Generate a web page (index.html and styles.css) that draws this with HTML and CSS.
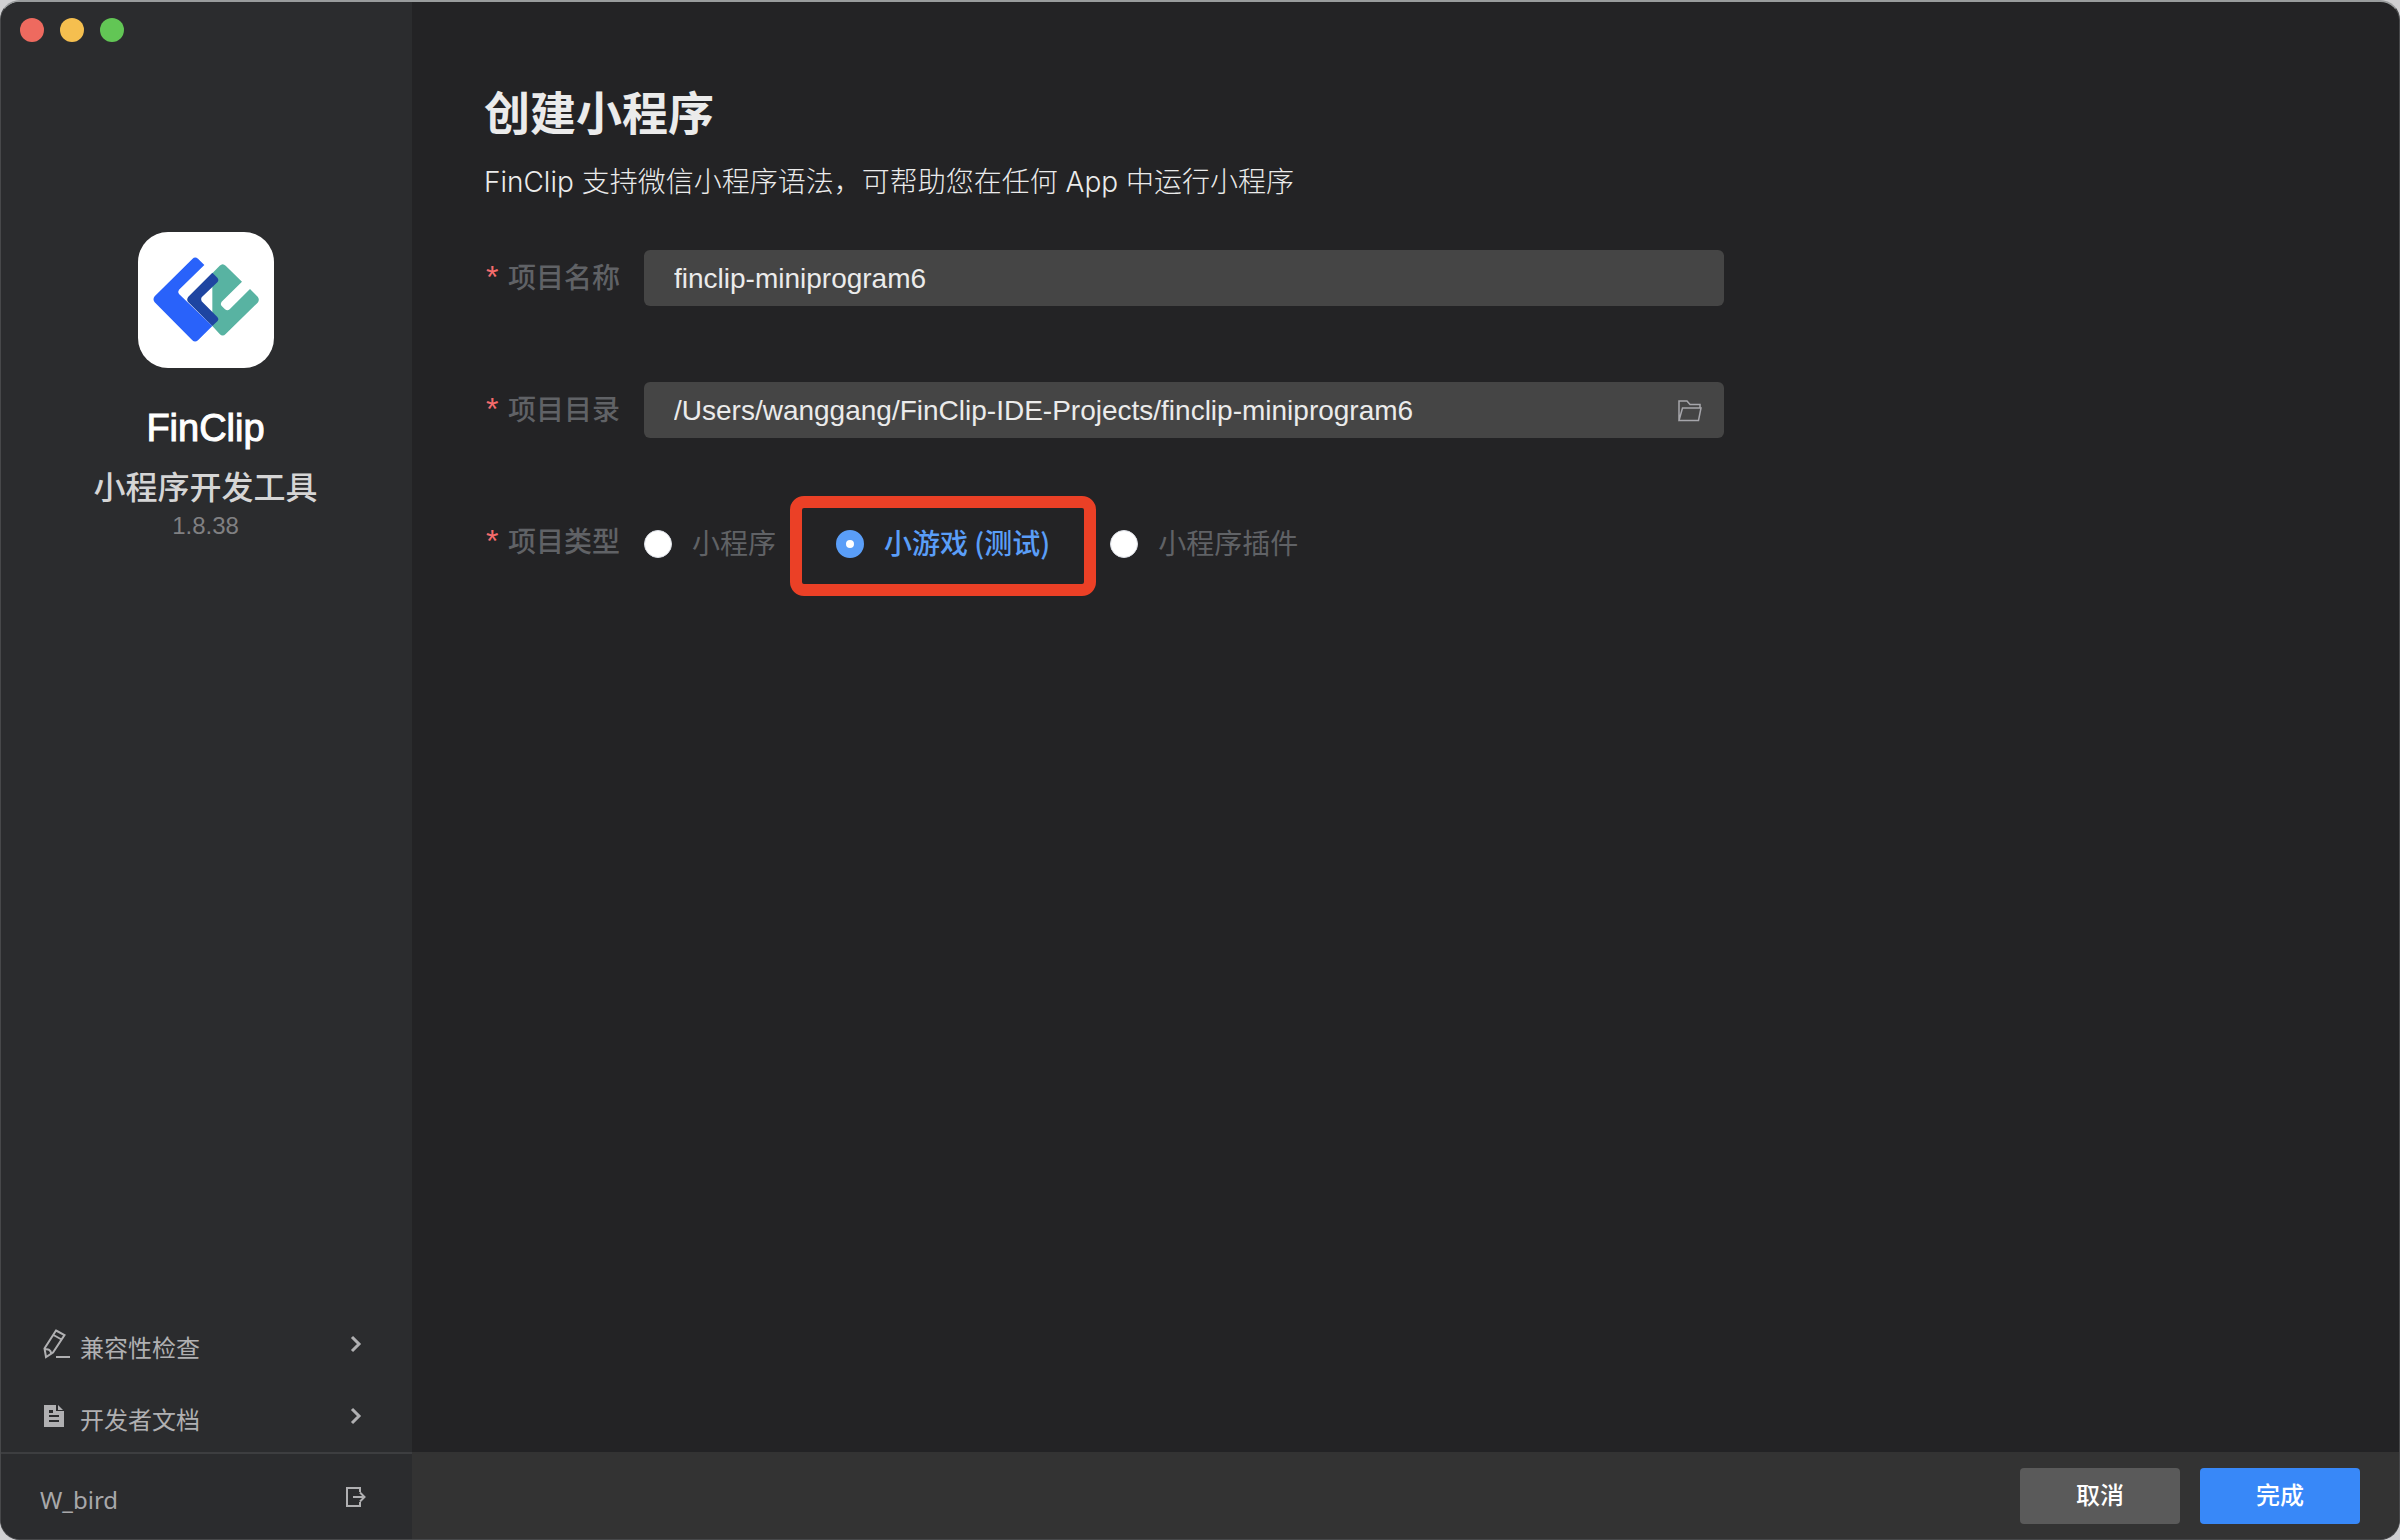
FILE: index.html
```
<!DOCTYPE html>
<html lang="zh-CN">
<head>
<meta charset="utf-8">
<title>FinClip 小程序开发工具</title>
<link rel="stylesheet" href="styles.css">
</head>
<body>
<div class="window">
    <aside class="sidebar">
        <div class="lights">
            <button class="light light-close" aria-label="关闭"></button>
            <button class="light light-min" aria-label="最小化"></button>
            <button class="light light-max" aria-label="缩放"></button>
        </div>
        <div class="brand">
            <svg class="logo" viewBox="0 0 408 408">
                <path fill="#2962fa" d="M163 81Q171 73 180 80L199 99L123 173Q118 180 123 186L223 282L180 325Q171 332 163 325L50 211Q43 202 50 193Z"/>
                <path fill="#58b3a2" d="M223 124L245 101Q254 92 263 101L312 149L251 209Q246 216 251 222L261 232Q268 238 275 232L336 171L359 194Q366 203 359 212L263 306Q254 315 245 306L223 282Z"/>
                <path fill="#1e45a1" d="M223 122L238 137Q244 144 238 151L191 196Q187 202 191 208L238 255Q244 262 238 268L223 282L151 211Q144 203 151 194Z"/>
            </svg>
            <div class="brand-name">FinClip</div>
            <div class="brand-desc">小程序开发工具</div>
            <div class="version">1.8.38</div>
        </div>
        <nav class="menu">
            <a href="#" class="menu-item">
                <svg class="icon" viewBox="0 0 28 30" fill="none" stroke="#b0b0b2" stroke-width="2">
                    <path d="M13 1.500L21.500 6L10 23.500L3 28L1.500 19.500ZM10.500 6L18.500 10.500M2 20.500Q7 19 8.500 25M13 28H27"/>
                </svg>
                <span class="menu-text">兼容性检查</span>
                <svg class="arrow" viewBox="0 0 12 18" fill="none" stroke="#b0b0b2" stroke-width="3"><path d="M2 2L9 9L2 16"/></svg>
            </a>
            <a href="#" class="menu-item">
                <svg class="icon" viewBox="0 0 28 30">
                    <path fill="#b0b0b2" fill-rule="evenodd" d="M1 4H13V10H21V26H1ZM6 9V12H10V9ZM6 14V16H16V14ZM6 19V21H16V19Z"/>
                    <path fill="#b0b0b2" d="M15 4L20 9H15Z"/>
                </svg>
                <span class="menu-text">开发者文档</span>
                <svg class="arrow" viewBox="0 0 12 18" fill="none" stroke="#b0b0b2" stroke-width="3"><path d="M2 2L9 9L2 16"/></svg>
            </a>
        </nav>
        <div class="user">
            <span class="user-name">W_bird</span>
            <button class="icon-button" aria-label="退出">
                <svg width="20" height="20" viewBox="0 0 20 20" fill="none" stroke="#b0b0b2" stroke-width="2"><path d="M14 5V1H1V19H14V15M7 10H18M14 5.500L18.500 10L14 14.500"/></svg>
            </button>
        </div>
    </aside>
    <main class="main">
        <form class="form" id="project-form">
            <h1 class="title">创建小程序</h1>
            <p class="subtitle">FinClip 支持微信小程序语法，可帮助您在任何 App 中运行小程序</p>
            <div class="row">
                <label class="label" for="project-name"><span class="star">*</span>项目名称</label>
                <div class="field">
                    <input type="text" id="project-name" class="input" value="finclip-miniprogram6">
                </div>
            </div>
            <div class="row">
                <label class="label" for="project-path"><span class="star">*</span>项目目录</label>
                <div class="field">
                    <input type="text" id="project-path" class="input" value="/Users/wanggang/FinClip-IDE-Projects/finclip-miniprogram6">
                    <button type="button" class="icon-button" aria-label="选择目录">
                        <svg width="24" height="22" viewBox="0 0 24 22" fill="none" stroke="#a6a6ab" stroke-width="1.500"><path d="M1 20V1H9L12 4.500H22V8M1 20.500L4.500 8H23L20.500 20.500Z"/></svg>
                    </button>
                </div>
            </div>
            <div class="row" role="radiogroup" aria-labelledby="type-label">
                <span class="label" id="type-label"><span class="star">*</span>项目类型</span>
                <div class="options">
                    <label class="option"><input type="radio" name="type" class="radio"><span>小程序</span></label>
                    <label class="option option-marked"><input type="radio" name="type" class="radio" checked><span>小游戏 (测试)</span></label>
                    <label class="option"><input type="radio" name="type" class="radio"><span>小程序插件</span></label>
                </div>
            </div>
        </form>
        <footer class="footer">
            <button class="button">取消</button>
            <button class="button button-primary" form="project-form">完成</button>
        </footer>
    </main>
</div>
</body>
</html>
```
FILE: styles.css
```
* {
    box-sizing: border-box;
}

body {
    margin: 0;
    background: #d0d0d2;
    font-family: "Liberation Sans", "Noto Sans CJK SC", sans-serif;
    color: #ebebeb;
}

button {
    font-family: inherit;
    border: none;
    cursor: pointer;
}

svg {
    display: block;
}

.window {
    display: flex;
    min-height: 100vh;
    border: 1px solid #47484a;
    border-top: 2px solid #999c9d;
    border-radius: 20px;
    background: #232325;
    overflow: hidden;
}

.sidebar {
    display: flex;
    flex-direction: column;
    flex: none;
    width: 411px;
    background: #2b2c2e;
}

.lights {
    display: flex;
    gap: 16px;
    padding: 16px 19px;
}

.light {
    width: 24px;
    height: 24px;
    padding: 0;
    border-radius: 50%;
}

.light-close {
    background: #ee6a5f;
}

.light-min {
    background: #f5bf4f;
}

.light-max {
    background: #62c655;
}

.brand {
    display: flex;
    flex-direction: column;
    align-items: center;
    padding: 174px 2px 0 0;
}

.logo {
    width: 136px;
    height: 136px;
    border-radius: 30px;
    background: #fff;
}

.brand-name {
    margin-top: 36px;
    font-size: 38px;
    line-height: 48px;
    color: #fff;
    -webkit-text-stroke: 1px #fff;
}

.brand-desc {
    margin-top: 14px;
    font-size: 32px;
    font-weight: 500;
    line-height: 44px;
    color: #d5d5d5;
}

.version {
    font-size: 24px;
    line-height: 32px;
    color: #808082;
}

.menu {
    margin-top: auto;
}

.menu-item {
    display: flex;
    align-items: center;
    height: 72px;
    padding: 0 50px 0 42px;
    font-size: 24px;
    color: #b0b0b2;
    text-decoration: none;
}

.menu-text {
    padding-top: 4px;
}

.icon {
    width: 28px;
    height: 30px;
    margin-right: 9px;
}

.arrow {
    width: 12px;
    height: 18px;
    margin-left: auto;
}

.user {
    display: flex;
    align-items: center;
    justify-content: space-between;
    height: 87px;
    padding: 0 46px 0 39px;
    border-top: 2px solid #3d3e40;
    font-family: "Noto Sans", sans-serif;
    font-size: 24px;
    color: #a8a8aa;
}

.user-name {
    padding-top: 6px;
}

.icon-button {
    padding: 0;
    background: none;
}

.main {
    display: flex;
    flex: 1;
    flex-direction: column;
}

.form {
    flex: 1;
    max-width: 1312px;
    padding: 80px 0 0 72px;
}

.title {
    margin: 0;
    font-size: 46px;
    font-weight: 600;
    line-height: 64px;
}

.subtitle {
    margin: 16px 0 48px;
    font-family: Inter, "Noto Sans CJK SC", sans-serif;
    font-size: 28px;
    font-weight: 300;
    line-height: 40px;
}

.row {
    display: flex;
    align-items: center;
    margin-bottom: 76px;
}

.label {
    width: 160px;
    padding-top: 2px;
    font-size: 28px;
    font-weight: 500;
    line-height: 54px;
    color: #606266;
}

.star {
    display: inline-block;
    width: 24px;
    padding-left: 2px;
    font-size: 32px;
    line-height: 40px;
    color: #f56c6c;
}

.field {
    display: flex;
    flex: 1;
    align-items: center;
    height: 56px;
    padding: 2px 22px 0 30px;
    border-radius: 6px;
    background: #454545;
}

.input {
    flex: 1;
    padding: 0;
    border: none;
    outline: none;
    background: none;
    font-family: inherit;
    font-size: 28px;
    color: #ebebeb;
}

.options {
    display: flex;
    gap: 60px;
    font-family: "Noto Sans CJK SC", sans-serif;
}

.option {
    position: relative;
    display: flex;
    align-items: center;
    gap: 20px;
    height: 56px;
    padding-top: 4px;
    font-size: 28px;
    line-height: 40px;
    color: #606266;
}

.option span {
    padding-bottom: 4px;
}

.radio {
    width: 28px;
    height: 28px;
    margin: 0;
    border: 1px solid #dcdfe6;
    border-radius: 50%;
    background: #fff;
    appearance: none;
}

.radio:checked {
    border: 10px solid #5a9ef8;
}

.option-marked {
    color: #5a9ef8;
    font-weight: 500;
}

.option-marked::after {
    content: "";
    position: absolute;
    top: -18px;
    right: -46px;
    bottom: -26px;
    left: -46px;
    border: 12px solid #eb4026;
    border-radius: 14px;
    pointer-events: none;
}

.footer {
    display: flex;
    align-items: center;
    justify-content: flex-end;
    gap: 20px;
    height: 87px;
    padding: 0 39px;
    background: #333;
}

.button {
    width: 160px;
    height: 56px;
    padding: 0 0 4px;
    border-radius: 4px;
    background: #5a5a5a;
    font-size: 24px;
    font-weight: 500;
    color: #fff;
}

.button-primary {
    background: #3888f8;
}
```
